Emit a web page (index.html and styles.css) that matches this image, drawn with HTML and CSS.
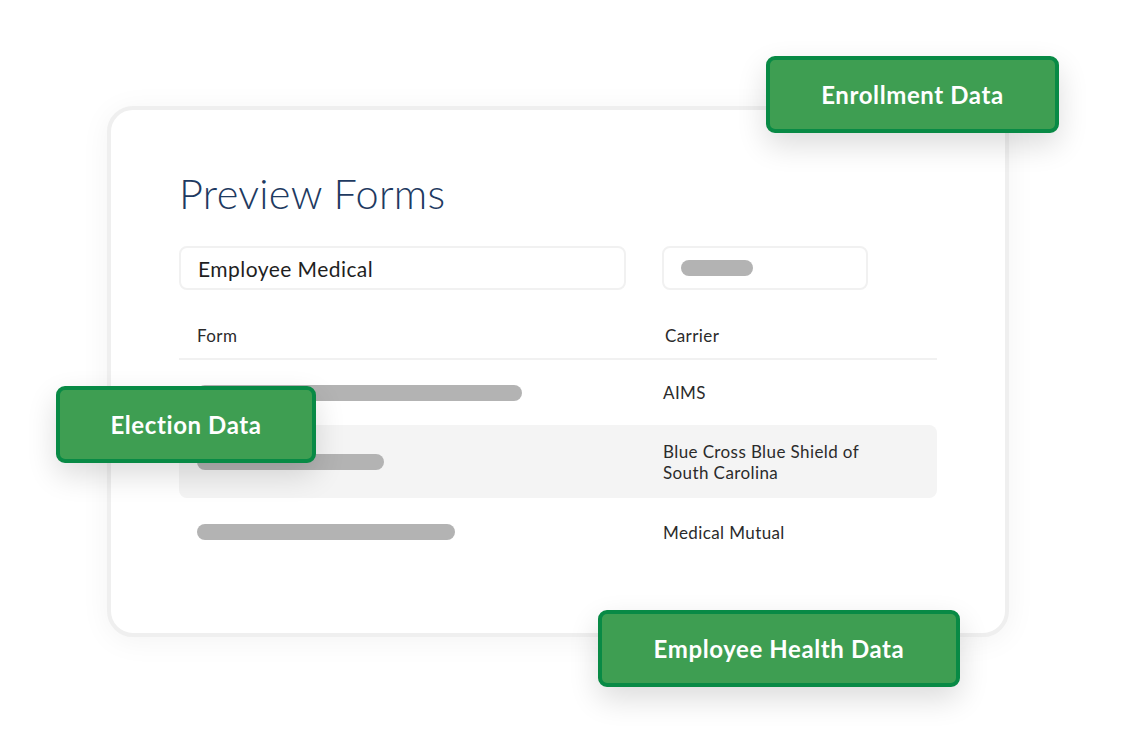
FILE: index.html
```html
<!DOCTYPE html>
<html lang="en">
<head>
<meta charset="utf-8">
<title>Preview Forms</title>
<link rel="stylesheet" href="styles.css">
</head>
<body>
<div class="stage">
  <section class="card">
    <h1 class="title">Preview Forms</h1>
    <div class="filters">
      <div class="field field-wide">Employee Medical</div>
      <div class="field field-narrow"><span class="bar bar-field"></span></div>
    </div>
    <div class="table">
      <div class="row head">
        <div class="cell">Form</div>
        <div class="cell carrier-head">Carrier</div>
      </div>
      <div class="row r1">
        <div class="cell"><span class="bar" style="width:325px"></span></div>
        <div class="cell">AIMS</div>
      </div>
      <div class="row r2 shaded">
        <div class="cell"><span class="bar" style="width:187px"></span></div>
        <div class="cell">Blue Cross Blue Shield of<br>South Carolina</div>
      </div>
      <div class="row r3">
        <div class="cell"><span class="bar" style="width:258px"></span></div>
        <div class="cell">Medical Mutual</div>
      </div>
    </div>
  </section>
  <div class="badge badge-enroll">Enrollment Data</div>
  <div class="badge badge-election">Election Data</div>
  <div class="badge badge-health">Employee Health Data</div>
</div>
</body>
</html>
```
FILE: styles.css
```css
* { box-sizing: border-box; }
html, body {
  margin: 0;
  padding: 0;
  background: #ffffff;
}
body {
  font-family: "Lato", "Noto Sans", sans-serif;
  color: #2a2a2a;
}
.stage {
  position: relative;
  width: 1126px;
  height: 754px;
  padding: 106px 0 0 107px;
}
.card {
  width: 902px;
  height: 531px;
  border: 4px solid #efefef;
  border-radius: 26px;
  background: #ffffff;
  box-shadow: 0 4px 30px rgba(0, 0, 0, 0.05);
  padding: 0 68px;
}
.title {
  margin: 0;
  padding-top: 59px;
  font-weight: 300;
  font-size: 41.5px;
  line-height: 48px;
  color: #1e3a61;
  letter-spacing: 0.3px;
}
.filters {
  display: flex;
  gap: 36px;
  margin-top: 29px;
}
.field {
  height: 44px;
  border: 2px solid #f1f1f1;
  border-radius: 8px;
  display: flex;
  align-items: center;
  padding-left: 17px;
  font-size: 21px;
  letter-spacing: 0.45px;
  color: #1f1f1f;
}
.field-wide { width: 447px; }
.field-narrow { width: 206px; }
.bar {
  display: block;
  height: 16px;
  border-radius: 8px;
  background: #b3b3b3;
}
.bar-field { width: 72px; }
.table {
  margin-top: 22px;
}
.row {
  display: grid;
  grid-template-columns: 466px 1fr;
  align-items: center;
  padding-left: 18px;
  font-size: 17px;
  letter-spacing: 0.4px;
  line-height: 21px;
  color: #2b2b2b;
}
.head {
  height: 48px;
  border-bottom: 2px solid #f1f1f1;
  padding-bottom: 0;
}
.carrier-head { padding-left: 2px; }
.r1 { height: 65px; }
.r2 { height: 73px; }
.r3 { height: 68px; }
.shaded {
  background: #f4f4f4;
  border-radius: 8px;
}
.badge {
  position: absolute;
  display: flex;
  align-items: center;
  justify-content: center;
  background: #3e9e52;
  border: 4px solid #088a45;
  border-radius: 9px;
  color: #ffffff;
  font-weight: 700;
  font-size: 24px;
  letter-spacing: 0.6px;
  box-shadow: 0 12px 30px rgba(0, 0, 0, 0.14);
}
.badge-enroll { left: 766px; top: 56px; width: 293px; height: 77px; }
.badge-election { left: 56px; top: 386px; width: 260px; height: 77px; }
.badge-health { left: 598px; top: 610px; width: 362px; height: 77px; }
```
